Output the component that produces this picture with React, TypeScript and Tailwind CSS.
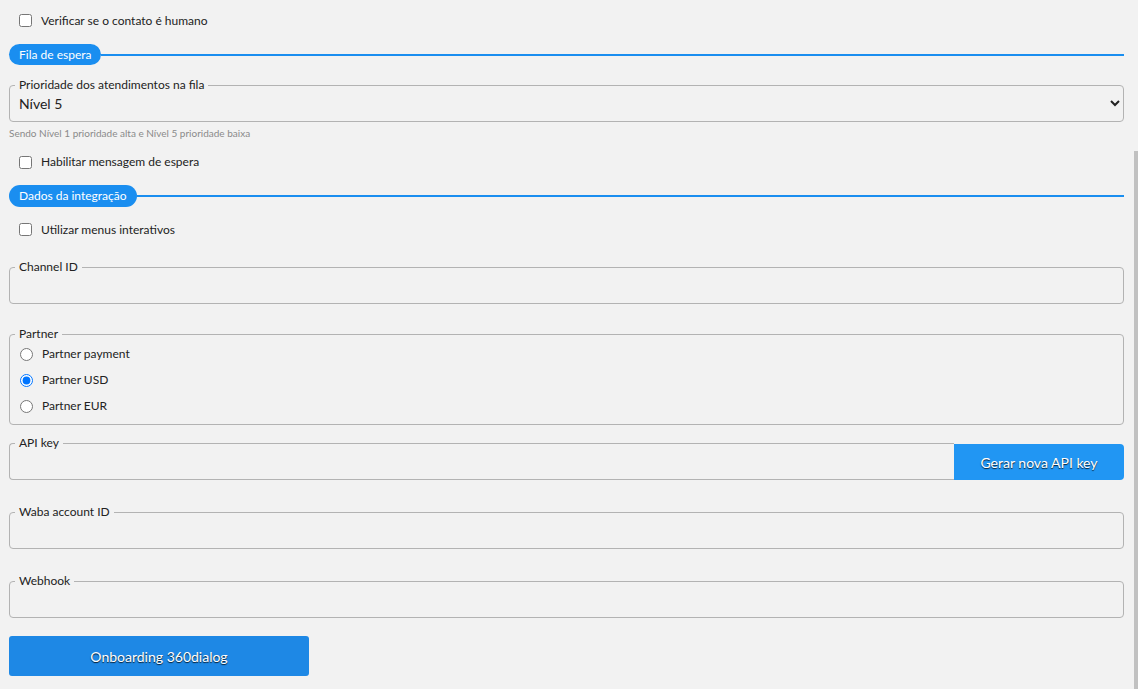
import { useState } from 'react';

const font = { fontFamily: 'Lato, "Open Sans", sans-serif' };

function CheckRow({ label, className }: { label: string; className: string }) {
  return (
    <label className={`flex items-center pl-[10px] text-[12px] text-[#222] ${className}`}>
      <input type="checkbox" className="m-0 h-[13px] w-[13px]" />
      <span className="ml-[9px]">{label}</span>
    </label>
  );
}

function SectionTitle({ title, className }: { title: string; className: string }) {
  return (
    <div className={`flex items-center ${className}`}>
      <span className="flex h-full items-center rounded-full bg-[#1a8ef0] px-[10px] text-[12px] text-white">
        {title}
      </span>
      <div className="h-[2px] flex-1 bg-[#1a8ef0]" />
    </div>
  );
}

function Field({ label, className }: { label: string; className: string }) {
  return (
    <fieldset className={`rounded-[4px] border border-[#b3b3b3] ${className}`}>
      <legend className="ml-[5px] px-[4px] text-[12px] leading-[14px] text-[#222]">{label}</legend>
      <input type="text" className="block h-[22px] w-full px-[9px] text-[14px] outline-none" />
      <div className="h-[7px]" />
    </fieldset>
  );
}

export default function App() {
  const [partner, setPartner] = useState('usd');
  const partners = [
    { id: 'payment', label: 'Partner payment' },
    { id: 'usd', label: 'Partner USD' },
    { id: 'eur', label: 'Partner EUR' },
  ];

  return (
    <div className="relative h-[689px] overflow-hidden bg-[#f2f2f2] text-[#222]" style={font}>
      <div className="flex flex-col pl-[9px] pr-[14px]">
        <CheckRow label="Verificar se o contato é humano" className="h-[41px]" />

        <SectionTitle title="Fila de espera" className="mt-[3px] h-[21px]" />

        {/* Prioridade */}
        <fieldset className="mt-[13px] rounded-[4px] border border-[#b3b3b3]">
          <legend className="ml-[5px] px-[4px] text-[12px] leading-[14px]">
            Prioridade dos atendimentos na fila
          </legend>
          <select defaultValue="5" className="block h-[22px] w-full pl-[5px] pr-[2px] text-[14px] outline-none">
            <option value="1">Nível 1</option>
            <option value="2">Nível 2</option>
            <option value="3">Nível 3</option>
            <option value="4">Nível 4</option>
            <option value="5">Nível 5</option>
          </select>
          <div className="h-[7px]" />
        </fieldset>
        <p className="mt-[5px] text-[10px] leading-[13px] text-[#8a8a8a]">
          Sendo Nível 1 prioridade alta e Nível 5 prioridade baixa
        </p>

        <CheckRow label="Habilitar mensagem de espera" className="mt-[7px] h-[30px]" />

        <SectionTitle title="Dados da integração" className="mt-[8px] h-[22px]" />

        <CheckRow label="Utilizar menus interativos" className="mt-[7px] h-[31px]" />

        <Field label="Channel ID" className="mt-[15px]" />

        {/* Partner */}
        <fieldset className="mt-[23px] rounded-[4px] border border-[#b3b3b3]">
          <legend className="ml-[5px] px-[4px] text-[12px] leading-[14px]">Partner</legend>
          {partners.map((p) => (
            <label key={p.id} className="flex h-[26px] items-center pl-[10px] text-[12px]">
              <input
                type="radio"
                name="partner"
                checked={partner === p.id}
                onChange={() => setPartner(p.id)}
                className="m-0 h-[13px] w-[13px]"
              />
              <span className="ml-[9px]">{p.label}</span>
            </label>
          ))}
          <div className="h-[5px]" />
        </fieldset>

        {/* API key */}
        <div className="mt-[11px] flex items-end">
          <fieldset className="flex-1 rounded-l-[4px] border border-r-0 border-[#b3b3b3]">
            <legend className="ml-[5px] px-[4px] text-[12px] leading-[14px]">API key</legend>
            <input type="text" className="block h-[22px] w-full px-[9px] text-[14px] outline-none" />
            <div className="h-[7px]" />
          </fieldset>
          <button className="h-[36px] w-[170px] rounded-r-[4px] bg-[#2196f3] text-[14px] text-white [text-shadow:0_1px_1px_rgba(0,0,0,0.8)]">
            Gerar nova API key
          </button>
        </div>

        <Field label="Waba account ID" className="mt-[25px]" />
        <Field label="Webhook" className="mt-[25px]" />

        <button className="mt-[18px] h-[40px] w-[300px] rounded-[3px] bg-[#1e88e5] text-[14px] text-white [text-shadow:0_1px_1px_rgba(0,0,0,0.8)]">
          Onboarding 360dialog
        </button>
      </div>

      {/* scrollbar thumb */}
      <div className="absolute bottom-0 right-0 top-[151px] w-[4px] bg-[#c1c1c1]" />
    </div>
  );
}
